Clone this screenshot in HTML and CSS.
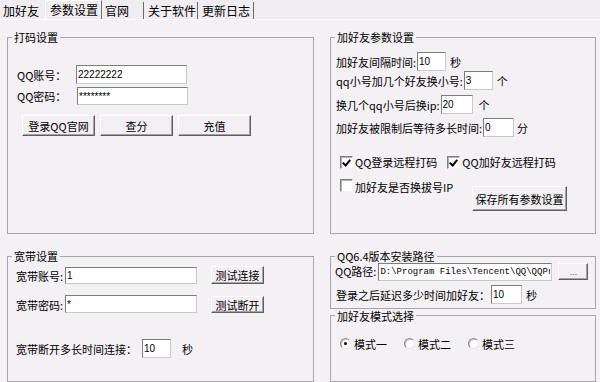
FILE: index.html
```html
<!DOCTYPE html>
<html>
<head lang="zh">
    <meta charset="UTF-8">
    <title>参数设置</title>
    <link rel="stylesheet" href="styles.css">
</head>
<body>
<div id="tabs">
    <span class="tab t1">加好友</span>
    <span class="tab t2 on">参数设置</span>
    <span class="tab t3">官网</span>
    <span class="tab t4">关于软件</span>
    <span class="tab t5">更新日志</span>
</div>
<div id="panel">
    <fieldset class="grp g-code">
        <legend>打码设置</legend>
        <div class="code-body">
            <div class="row r1">
                <span class="lbl w58">QQ账号：</span>
                <input class="txt" type="text" value="22222222">
            </div>
            <div class="row r2">
                <span class="lbl w59">QQ密码：</span>
                <input class="txt" type="text" value="********">
            </div>
            <div class="btns">
                <button class="btn">登录QQ官网</button>
                <button class="btn">查分</button>
                <button class="btn">充值</button>
            </div>
        </div>
    </fieldset>

    <fieldset class="grp g-param">
        <legend>加好友参数设置</legend>
        <div class="param-body">
            <div class="row p1">
                <span class="lbl">加好友间隔时间:</span>
                <input class="txt" type="text" value="10">
                <span class="unit">秒</span>
            </div>
            <div class="row p2">
                <span class="lbl">qq小号加几个好友换小号:</span>
                <input class="txt" type="text" value="3">
                <span class="unit">个</span>
            </div>
            <div class="row p3">
                <span class="lbl">换几个qq小号后换ip:</span>
                <input class="txt" type="text" value="20">
                <span class="unit">个</span>
            </div>
            <div class="row p4">
                <span class="lbl">加好友被限制后等待多长时间:</span>
                <input class="txt" type="text" value="0">
                <span class="unit">分</span>
            </div>
            <div class="row c1">
                <span class="chk on"></span><span class="opt">QQ登录远程打码</span>
                <span class="chk on c-2"></span><span class="opt">QQ加好友远程打码</span>
            </div>
            <div class="row c2">
                <span class="chk"></span><span class="opt">加好友是否换拔号IP</span>
                <button class="btn save">保存所有参数设置</button>
            </div>
        </div>
    </fieldset>

    <fieldset class="grp g-net">
        <legend>宽带设置</legend>
        <div class="net-body">
            <div class="row n1">
                <span class="lbl">宽带账号:</span>
                <input class="txt" type="text" value="1">
                <button class="btn small">测试连接</button>
            </div>
            <div class="row n2">
                <span class="lbl">宽带密码:</span>
                <input class="txt" type="text" value="*">
                <button class="btn small">测试断开</button>
            </div>
            <div class="row n3">
                <span class="lbl">宽带断开多长时间连接：</span>
                <input class="txt" type="text" value="10">
                <span class="unit">秒</span>
            </div>
        </div>
    </fieldset>

    <div class="col">
        <fieldset class="grp g-path">
            <legend>QQ6.4版本安装路径</legend>
            <div class="path-body">
                <div class="row q1">
                    <span class="lbl">QQ路径:</span>
                    <input class="txt path" type="text" value="D:\Program Files\Tencent\QQ\QQProtect">
                    <button class="btn dots">...</button>
                </div>
                <div class="row q2">
                    <span class="lbl">登录之后延迟多少时间加好友：</span>
                    <input class="txt" type="text" value="10">
                    <span class="unit">秒</span>
                </div>
            </div>
        </fieldset>
        <fieldset class="grp g-mode">
            <legend>加好友模式选择</legend>
            <div class="row modes">
                <span class="rad on"></span><span class="opt">模式一</span>
                <span class="rad"></span><span class="opt">模式二</span>
                <span class="rad"></span><span class="opt">模式三</span>
            </div>
        </fieldset>
    </div>
</div>
</body>
</html>
```

FILE: styles.css
```css
*{
    margin: 0;
    padding: 0;
    box-sizing: border-box;
}
html,body{
    width: 600px;
    height: 382px;
    overflow: hidden;
}
body{
    background: #f3f1f4;
    color: #000;
    font-family: "Noto Sans CJK SC", "Liberation Sans", sans-serif;
    font-size: 11px;
}
#tabs{
    display: flex;
    align-items: flex-end;
    height: 20px;
    padding-left: 2px;
    background: #efedf0;
    border-bottom: 1px solid #fdfdfd;
}
.tab{
    height: 17px;
    line-height: 17px;
    font-size: 12px;
    padding-left: 1px;
}
.t1{ width: 43px; }
.t2{ width: 57px; }
.t3{ width: 42px; }
.t4{ width: 54px; }
.t5{ width: 56px; }
.tab.on{
    height: 19px;
    line-height: 18px;
    padding-left: 4px;
    border-left: 1px solid #fff;
    border-top: 1px solid #fff;
    border-right: 1px solid #6f6f6f;
}
.t3{ padding-left: 3px; border-right: 1px solid #6a6a6a; }
.t4{ padding-left: 4px; border-right: 1px solid #6a6a6a; }
.t5{ padding-left: 4px; border-right: 1px solid #6a6a6a; }

#panel{
    display: grid;
    grid-template-columns: 307px 266px;
    grid-template-rows: 203px 132px;
    column-gap: 16px;
    row-gap: 16px;
    padding: 11px 0 0 7px;
}
.grp{
    border: 1px solid #a7a5a9;
    min-width: 0;
}
.grp legend{
    margin-left: 4px;
    padding: 0 2px;
    line-height: 12px;
}
.row{
    display: flex;
    align-items: center;
    white-space: nowrap;
}
.txt{
    height: 19px;
    background: #fff;
    border: 1px solid;
    border-color: #7c7c7c #c9c9c9 #c9c9c9 #7c7c7c;
    font-family: "Liberation Sans", sans-serif;
    font-size: 10px;
    padding: 0 1px;
    color: #000;
    outline: none;
}
.btn{
    background: #f1eff2;
    border: 1px solid;
    border-color: #fff #5e5e5e #5e5e5e #fff;
    box-shadow: inset -1px -1px #a3a3a3;
    font-family: "Noto Sans CJK SC", sans-serif;
    font-size: 11px;
    color: #000;
}
.unit{
    margin-left: 4px;
}

/* 打码设置 */
.code-body{
    padding: 22px 0 0 9px;
}
.w58{ width: 58px; }
.w59{ width: 59px; }
.r1 .txt{ width: 111px; }
.r2{ margin-top: 3px; }
.r2 .txt{ width: 111px; height: 18px; }
.btns{
    display: flex;
    gap: 5px;
    margin: 10px 0 0 5px;
}
.btns .btn{
    width: 73px;
    height: 21px;
}

/* 加好友参数设置 */
.param-body{
    padding: 9px 0 0 5px;
}
.p1 .txt{ width: 29px; }
.p2 .txt{ width: 29px; }
.p3{ margin-top: 5px; }
.p3 .txt{ width: 32px; }
.p3 .unit{ margin-left: 6px; }
.p4{ margin-top: 4px; }
.p4 .txt{ width: 31px; }
.p4 .unit{ margin-left: 3px; }
.lbl{
    margin-right: 1px;
}
.chk{
    width: 13px;
    height: 13px;
    background: #fff;
    border: 1px solid;
    border-color: #808080 #f4f4f4 #f4f4f4 #808080;
    box-shadow: inset 1px 1px #b0b0b0;
    margin: 0 2px 0 4px;
    position: relative;
}
.chk.on::after{
    content: "";
    position: absolute;
    left: 3px;
    top: 1px;
    width: 3px;
    height: 6px;
    border: solid #000;
    border-width: 0 2px 2px 0;
    transform: rotate(40deg);
}
.c1{
    margin-top: 17px;
}
.chk.c-2{
    margin-left: 10px;
}
.c2{
    margin-top: 9px;
    align-items: flex-start;
}
.save{
    width: 95px;
    height: 25px;
    margin: 7px 28px 0 auto;
}

/* 宽带设置 */
.net-body{
    padding: 4px 0 0 8px;
}
.n1, .n2{
    align-items: flex-end;
}
.n1 .txt, .n2 .txt{
    width: 132px;
    height: 17px;
    margin-left: 1px;
}
.n2 .txt{ height: 18px; }
.btn.small{
    width: 53px;
    height: 18px;
    margin-left: 14px;
}
.n2{ margin-top: 11px; }
.n2 .btn.small{ height: 17px; }
.n3{ margin-top: 26px; }
.n3 .txt{ width: 29px; margin-left: 4px; }
.n3 .unit{ margin-left: 11px; }

/* 右下 */
.col{
    display: flex;
    flex-direction: column;
}
.g-path{
    height: 65px;
}
.path-body{
    padding: 1px 0 0 4px;
}
.q1{
    align-items: flex-start;
}
.path{
    width: 174px;
    height: 18px;
    font-family: "Liberation Mono", monospace;
    font-size: 9px;
    margin-left: 1px;
}
.dots{
    width: 30px;
    height: 17px;
    margin-left: 6px;
    font-family: "Liberation Sans", sans-serif;
    font-size: 9px;
    color: #555;
}
.q2{
    margin-top: 4px;
    padding-left: 1px;
}
.q2 .txt{ width: 31px; }
.g-mode{
    margin-top: 1px;
    height: 80px;
}
.modes{
    margin: 14px 0 0 9px;
}
.rad{
    width: 11px;
    height: 11px;
    border-radius: 50%;
    background: #fff;
    border: 1px solid;
    border-color: #8a8a8a #e6e6e6 #e6e6e6 #8a8a8a;
    box-shadow: inset 1px 1px #c4c4c4;
    margin-right: 3px;
    position: relative;
}
.rad.on::after{
    content: "";
    position: absolute;
    left: 3px;
    top: 3px;
    width: 3px;
    height: 3px;
    border-radius: 50%;
    background: #000;
}
.modes .opt{
    margin-right: 17px;
}
```
